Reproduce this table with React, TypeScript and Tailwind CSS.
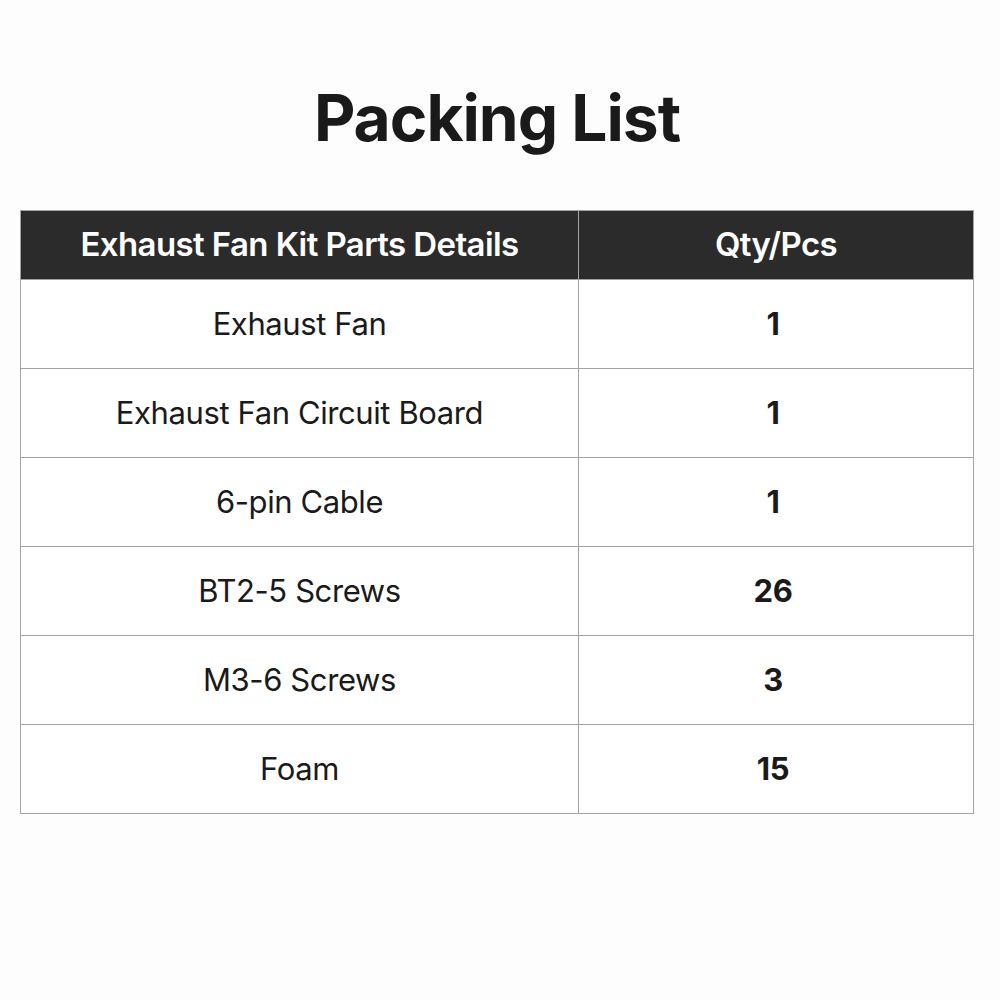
import React from "react";

const rows: [string, string][] = [
  ["Exhaust Fan", "1"],
  ["Exhaust Fan Circuit Board", "1"],
  ["6-pin Cable", "1"],
  ["BT2-5 Screws", "26"],
  ["M3-6 Screws", "3"],
  ["Foam", "15"],
];

export default function App() {
  return (
    <div
      className="w-[1000px] h-[1000px] bg-[#fdfdfd] flex flex-col"
      style={{ fontFamily: "Inter, 'Noto Sans', sans-serif" }}
    >
      <h1 className="mt-[76px] h-[84px] pr-[6px] flex items-center justify-center text-[64px] font-bold text-[#1a1a1a] tracking-[-1px] leading-none">
        Packing List
      </h1>
      <div className="mt-[50px] ml-[20px] w-[954px] border border-[#a3a3a3] flex flex-col">
        <div className="flex h-[68px] bg-[#2b2b2b] text-white text-[33px] font-semibold tracking-[-0.6px]">
          <div className="w-[558px] flex items-center justify-center border-r border-[#a3a3a3]">
            Exhaust Fan Kit Parts Details
          </div>
          <div className="flex-1 flex items-center justify-center">Qty/Pcs</div>
        </div>
        {rows.map(([name, qty], i) => (
          <div
            key={i}
            className="flex h-[89px] bg-white border-t border-[#a3a3a3] text-[#1a1a1a] text-[31px] tracking-[-0.4px]"
          >
            <div className="w-[558px] flex items-center justify-center border-r border-[#a3a3a3] font-normal">
              {name}
            </div>
            <div className="flex-1 flex items-center justify-center pr-[6px] font-bold">{qty}</div>
          </div>
        ))}
      </div>
    </div>
  );
}
